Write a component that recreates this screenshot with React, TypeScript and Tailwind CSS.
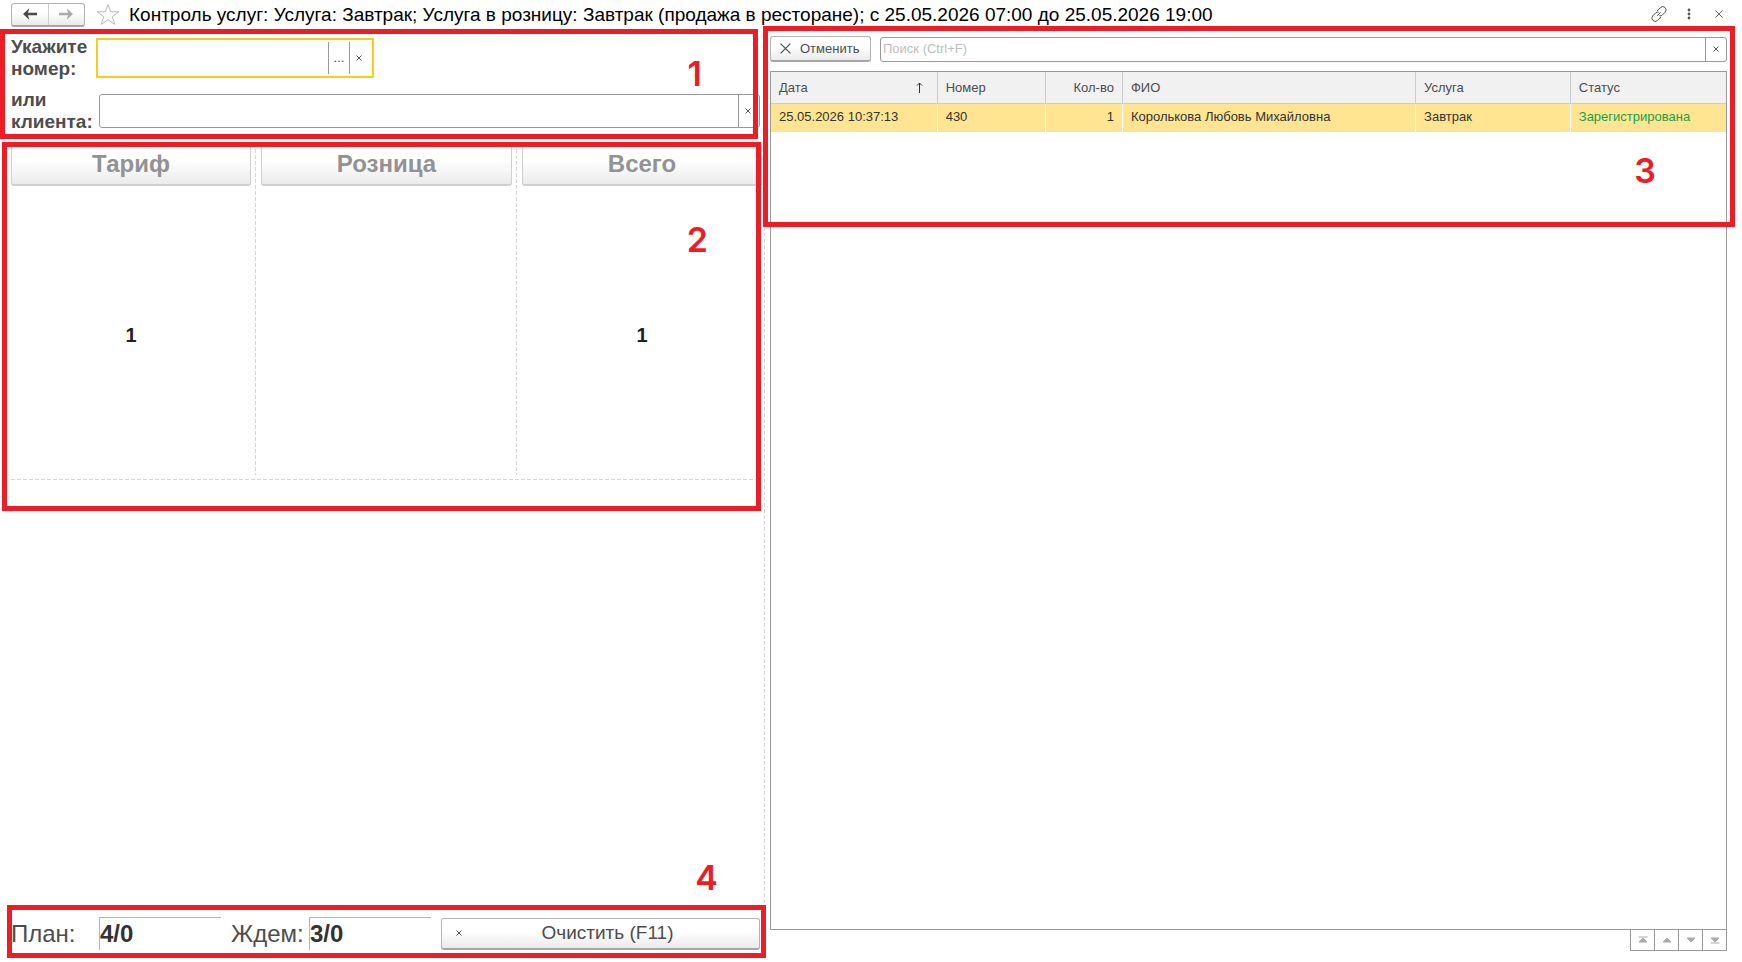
import { useState } from 'react';

type Operation = {
  date: string;
  room: string;
  count: number;
  guest: string;
  service: string;
  status: string;
};

const operations: Operation[] = [
  {
    date: '25.05.2026 10:37:13',
    room: '430',
    count: 1,
    guest: 'Королькова Любовь Михайловна',
    service: 'Завтрак',
    status: 'Зарегистрирована',
  },
];

const raised = 'border border-[#b3b3b3] border-b-2 border-b-[#a6a6a6] rounded-[3px] bg-linear-to-b from-white from-40% to-[#ebebeb]';
const dashedY = 'w-px bg-[repeating-linear-gradient(180deg,#d6d6d6_0_4px,transparent_4px_6px)]';
const dashedX = 'h-px bg-[repeating-linear-gradient(90deg,#d6d6d6_0_4px,transparent_4px_6px)]';

const Cross = ({ className }: { className: string }) => (
  <svg viewBox="0 0 10 10" className={className} fill="none" stroke="currentColor">
    <path d="M0.5 0.5 L9.5 9.5 M9.5 0.5 L0.5 9.5" />
  </svg>
);

const SmallCross = () => (
  <svg viewBox="0 0 6 6" className="size-[6px]" fill="none" stroke="#555">
    <path d="M0.5 0.5 L5.5 5.5 M5.5 0.5 L0.5 5.5" />
  </svg>
);

// Red frame with a number that marks a zone of the form
const Zone = ({ number, frame, place }: { number: number; frame: string; place: string }) => (
  <>
    <div className={`pointer-events-none absolute z-10 border-[5px] border-[#ee1c25] ${frame}`} />
    <span className={`pointer-events-none absolute z-10 font-[Inter,sans-serif] text-[34px] leading-[34px] font-semibold text-[#ee1c25] ${place}`}>
      {number}
    </span>
  </>
);

const TitleBar = () => (
  <header className="flex h-[29px] items-center pr-[17px] pl-[11px]">
    <div className={`flex h-6 w-[74px] ${raised}`}>
      <button aria-label="Назад" className="flex flex-1 items-center justify-center border-r border-[#d0d0d0] text-[#4a4a4a]">
        <svg viewBox="0 0 14 12" className="h-3 w-[14px]" fill="currentColor">
          <path d="M0 6 L6 0.5 V1.5 L5 4.8 H14 V7.2 H5 L6 10.5 V11.5 Z" />
        </svg>
      </button>
      <button aria-label="Вперед" className="flex flex-1 items-center justify-center text-[#ababab]">
        <svg viewBox="0 0 14 12" className="h-3 w-[14px]" fill="currentColor">
          <path d="M14 6 L8 0.5 V1.5 L9 4.8 H0 V7.2 H9 L8 10.5 V11.5 Z" />
        </svg>
      </button>
    </div>
    <button aria-label="В избранное" className="ml-[11px]">
      <svg viewBox="0 0 24 23" className="h-[23px] w-6" fill="none" stroke="#b4bac0">
        <path d="M12 1.5 L14.7 8.8 H22.8 L16.3 13.6 L18.8 21.4 L12 16.6 L5.2 21.4 L7.7 13.6 L1.2 8.8 H9.3 Z" />
      </svg>
    </button>
    <h1 className="ml-[9px] flex-1 truncate text-[19px] leading-[24px] text-black">
      Контроль услуг: Услуга: Завтрак; Услуга в розницу: Завтрак (продажа в ресторане); с 25.05.2026 07:00 до 25.05.2026 19:00
    </h1>
    <div className="flex items-center pb-px text-[#555]">
      <button aria-label="Ссылка">
        <svg viewBox="0 0 16 16" className="size-4" fill="none" stroke="currentColor" strokeLinecap="round">
          <path d="M6.2 4.8 L9.3 1.7 A3 3 0 0 1 14.2 6.2 L11.2 9.2 A3 3 0 0 1 8.6 9.9" />
          <path d="M9.8 11.2 L6.7 14.3 A3 3 0 0 1 1.8 9.8 L4.8 6.8 A3 3 0 0 1 7.4 6.1" />
          <path d="M6.6 9.4 L9.4 6.6" />
        </svg>
      </button>
      <button aria-label="Еще" className="ml-5">
        <svg viewBox="0 0 4 12" className="h-3 w-1" fill="currentColor">
          <circle cx="2" cy="2" r="1.4" />
          <circle cx="2" cy="6" r="1.4" />
          <circle cx="2" cy="10" r="1.4" />
        </svg>
      </button>
      <button aria-label="Закрыть" className="mr-[2px] ml-6 text-[#444]">
        <Cross className="size-2" />
      </button>
    </div>
  </header>
);

const SearchForm = () => (
  <section className="relative pt-[7px] pr-1 pb-[5px] pl-[11px]">
    <div className="flex items-center">
      <label htmlFor="room" className="w-[85px] text-[19px] leading-[22px] font-bold">
        Укажите номер:
      </label>
      <div className="flex h-10 w-[278px] border-2 border-[#fbcb1d] py-[2px]">
        <input id="room" className="min-w-0 flex-1 px-1 text-lg outline-none" />
        <button aria-label="Выбрать" className="w-[21px] border-l border-[#999] text-[13px]">
          ...
        </button>
        <button aria-label="Очистить номер" className="flex w-[23px] items-center justify-center border-l border-[#999] pr-1">
          <SmallCross />
        </button>
      </div>
    </div>
    <div className="mt-[9px] flex items-center">
      <label htmlFor="client" className="w-[88px] text-[19px] leading-[22px] font-bold">
        или клиента:
      </label>
      <div className="flex h-[34px] flex-1 rounded-[3px] border border-[#999]">
        <input id="client" className="min-w-0 flex-1 px-1 text-lg outline-none" />
        <button aria-label="Очистить клиента" className="flex w-[21px] items-center justify-center border-l border-[#999] pr-[2px]">
          <SmallCross />
        </button>
      </div>
    </div>
    <Zone number={1} frame="-bottom-px top-0 left-0 right-[6px]" place="top-[28px] right-[62px]" />
  </section>
);

const Totals = () => {
  const totals = [
    { title: 'Тариф', value: '1' },
    { title: 'Розница', value: '' },
    { title: 'Всего', value: '1' },
  ];

  return (
    <section className="relative mt-1 pt-px pb-[31px] pl-[11px]">
      <div className="grid grid-cols-[240fr_auto_251fr_auto_240fr] gap-x-1 pr-[2px]">
        {totals.map((total, i) => (
          <div key={total.title} className="contents">
            {i > 0 && <div className={`mr-px h-[332px] ${dashedY}`} />}
            <div className="flex flex-col">
              <button className="h-[43px] rounded-[3px] border border-b-2 border-[#cfcfcf] bg-linear-to-b from-white from-40% to-[#ebebeb] text-2xl font-bold text-[#929292]">
                {total.title}
              </button>
              <div className="flex flex-1 items-center justify-center pt-2 text-xl font-bold text-[#222]">{total.value}</div>
            </div>
          </div>
        ))}
      </div>
      <div className={`mt-1 mr-1 ${dashedX}`} />
      <Zone number={2} frame="inset-y-0 left-[2px] right-[3px]" place="top-[81px] right-[56px]" />
    </section>
  );
};

const Footer = () => (
  <section className="relative mb-1 flex h-[53px] items-center pt-1 pr-1 pl-[11px] text-2xl">
    <label htmlFor="plan" className="w-[88px]">
      План:
    </label>
    <input id="plan" readOnly value="4/0" className="h-[33px] w-[122px] border-t border-l border-[#b3b3b3] font-bold text-[#333] outline-none" />
    <label htmlFor="wait" className="ml-[10px] w-[78px]">
      Ждем:
    </label>
    <input id="wait" readOnly value="3/0" className="h-[33px] w-[122px] border-t border-l border-[#b3b3b3] font-bold text-[#333] outline-none" />
    <button className={`ml-[10px] flex h-8 flex-1 items-center pl-[14px] text-[19px] ${raised}`}>
      <SmallCross />
      <span className="flex-1 pr-[6px] text-center">Очистить (F11)</span>
    </button>
    <Zone number={4} frame="inset-y-0 left-[7px] -right-[2px]" place="-top-[44px] right-[46px]" />
  </section>
);

const OperationsTable = () => {
  const head = 'border-l border-[#ccc] px-2 text-left font-normal first:border-l-0';
  const cell = 'border-l border-white px-2 first:border-l-0';

  return (
    <table className="w-full table-fixed border-collapse text-[13px]">
      <colgroup>
        <col className="w-[17.4%]" />
        <col className="w-[11.3%]" />
        <col className="w-[8.1%]" />
        <col className="w-[30.7%]" />
        <col className="w-[16.2%]" />
        <col />
      </colgroup>
      <thead>
        <tr className="h-[31px] border-b border-[#ccc] bg-[#f1f1f1] text-[#4d4d4d]">
          <th className={head}>
            <span className="flex items-center justify-between pr-[6px]">
              Дата
              <svg viewBox="0 0 7 11" className="h-[11px] w-[7px]" fill="none" stroke="#333">
                <path d="M3.5 11 V1 M1 3.5 L3.5 1 L6 3.5" />
              </svg>
            </span>
          </th>
          <th className={head}>Номер</th>
          <th className={`${head} text-right`}>Кол-во</th>
          <th className={head}>ФИО</th>
          <th className={head}>Услуга</th>
          <th className={head}>Статус</th>
        </tr>
      </thead>
      <tbody>
        {operations.map((op) => (
          <tr key={op.date} className="h-7 border-b border-[#e0e0e0] bg-[#ffe592] text-[#333]">
            <td className={cell}>{op.date}</td>
            <td className={cell}>{op.room}</td>
            <td className={`${cell} text-right`}>{op.count}</td>
            <td className={cell}>{op.guest}</td>
            <td className={cell}>{op.service}</td>
            <td className={`${cell} text-[#16a04a]`}>{op.status}</td>
          </tr>
        ))}
      </tbody>
    </table>
  );
};

const pager = [
  { label: 'В начало', path: 'M0.5 1 H9.5 M5 2 L9 6 H1 Z' },
  { label: 'Вверх', path: 'M5 2 L9 6 H1 Z' },
  { label: 'Вниз', path: 'M1 2 H9 L5 6 Z' },
  { label: 'В конец', path: 'M1 2 H9 L5 6 Z M0.5 7 H9.5' },
];

const Operations = () => {
  const [search, setSearch] = useState('');

  return (
    <section className="relative flex flex-col pt-[7px] pr-[15px] pb-[11px] pl-[5px]">
      <div className="flex items-center text-[13px]">
        <button className={`flex h-[26px] w-[101px] items-center pl-[9px] ${raised}`}>
          <Cross className="mr-[9px] size-[11px] text-[#3c4a55]" />
          Отменить
        </button>
        <div className="ml-[9px] flex h-[25px] flex-1 rounded-[3px] border border-[#999]">
          <input
            aria-label="Поиск"
            placeholder="Поиск (Ctrl+F)"
            value={search}
            onChange={(e) => setSearch(e.target.value)}
            className="min-w-0 flex-1 pl-[2px] outline-none placeholder:text-[#bdbdbd]"
          />
          <button aria-label="Очистить поиск" onClick={() => setSearch('')} className="flex w-[21px] items-center justify-center border-l border-[#999]">
            <SmallCross />
          </button>
        </div>
      </div>
      <div className="mt-[9px] flex-1 border border-[#999]">
        <OperationsTable />
      </div>
      <div className="-mt-px flex self-end border-l border-[#999]">
        {pager.map((item) => (
          <button key={item.label} aria-label={item.label} className="flex h-[22px] w-6 items-center justify-center border border-l-0 border-[#999]">
            <svg viewBox="0 0 10 8" className="h-2 w-[10px]" fill="#aaa" stroke="#aaa">
              <path d={item.path} />
            </svg>
          </button>
        ))}
      </div>
      <Zone number={3} frame="-top-[3px] -left-[2px] right-[7px] h-[201px]" place="top-[125px] right-[86px]" />
    </section>
  );
};

export default function App() {
  return (
    <div className="flex min-h-screen flex-col bg-white font-['Liberation_Sans',Arial,sans-serif] text-[#4d4d4d]">
      <TitleBar />
      <main className="grid flex-1 grid-cols-[764fr_auto_977fr]">
        <div className="relative z-10 flex flex-col">
          <SearchForm />
          <Totals />
          <div className="flex-1" />
          <Footer />
        </div>
        <div className={`mb-3 ${dashedY}`} />
        <Operations />
      </main>
    </div>
  );
}
